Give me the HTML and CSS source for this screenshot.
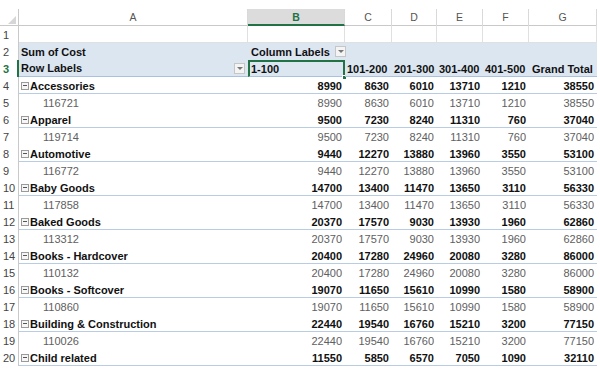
FILE: index.html
```html
<!DOCTYPE html>
<html lang="en">

<head>
    <meta charset="UTF-8">
    <meta name="viewport" content="width=device-width, initial-scale=1.0">
    <title>Sum of Cost pivot</title>

    <link rel="stylesheet" href="styles.css">
</head>

<body>

    <!-- Sheet grid -->
    <div class="sheet" id="sheet">

        <!-- Column letters -->
        <div class="row col-heads">
            <div class="corner"><span class="tri"></span></div>
            <div class="col-head">A</div>
            <div class="col-head active">B</div>
            <div class="col-head">C</div>
            <div class="col-head">D</div>
            <div class="col-head">E</div>
            <div class="col-head">F</div>
            <div class="col-head">G</div>
        </div>

        <!-- Row 1: empty -->
        <div class="row blank">
            <div class="num">1</div>
            <div class="cell"></div>
            <div class="cell"></div>
            <div class="cell"></div>
            <div class="cell"></div>
            <div class="cell"></div>
            <div class="cell"></div>
            <div class="cell"></div>
        </div>

        <!-- Row 2: pivot title -->
        <div class="row band">
            <div class="num">2</div>
            <div class="cell bold">Sum of Cost</div>
            <div class="cell bold span-rest">Column Labels <span class="drop"></span></div>
        </div>

        <!-- Row 3: pivot headers -->
        <div class="row band head-line">
            <div class="num sel">3</div>
            <div class="cell bold with-drop">Row Labels <span class="drop"></span></div>
            <div class="cell bold picked">1-100<span class="handle"></span></div>
            <div class="cell bold">101-200</div>
            <div class="cell bold">201-300</div>
            <div class="cell bold">301-400</div>
            <div class="cell bold">401-500</div>
            <div class="cell bold gt">Grand Total</div>
        </div>

        <!-- Rows 4+ filled in below -->
    </div>

    <script>
        const sheet = document.getElementById('sheet');

        // Category, item code, then costs per bucket and the grand total
        const groups = [
            ['Accessories', '116721', [8990, 8630, 6010, 13710, 1210, 38550]],
            ['Apparel', '119714', [9500, 7230, 8240, 11310, 760, 37040]],
            ['Automotive', '116772', [9440, 12270, 13880, 13960, 3550, 53100]],
            ['Baby Goods', '117858', [14700, 13400, 11470, 13650, 3110, 56330]],
            ['Baked Goods', '113312', [20370, 17570, 9030, 13930, 1960, 62860]],
            ['Books - Hardcover', '110132', [20400, 17280, 24960, 20080, 3280, 86000]],
            ['Books - Softcover', '110860', [19070, 11650, 15610, 10990, 1580, 58900]],
            ['Building &amp; Construction', '110026', [22440, 19540, 16760, 15210, 3200, 77150]],
            ['Child related', null, [11550, 5850, 6570, 7050, 1090, 32110]]
        ];

        function numberCells(values) {
            return values.map(v => `<div class="cell val">${v}</div>`).join('');
        }

        let rowNo = 4;
        let html = '';
        groups.forEach(([label, code, values]) => {
            html += `
                <div class="row group">
                    <div class="num">${rowNo++}</div>
                    <div class="cell bold"><span class="minus"></span>${label}</div>
                    ${numberCells(values)}
                </div>`;
            if (code) {
                html += `
                    <div class="row item">
                        <div class="num">${rowNo++}</div>
                        <div class="cell code">${code}</div>
                        ${numberCells(values)}
                    </div>`;
            }
        });

        sheet.insertAdjacentHTML('beforeend', html);
    </script>

</body>

</html>
```

FILE: styles.css
```css
* {
    margin: 0;
    padding: 0;
    box-sizing: border-box;
}

html, body {
    width: 100%;
    height: 100%;
    overflow: hidden;
    background-color: #ffffff;
    font-family: "Liberation Sans", Arial, sans-serif;
    font-size: 11px;
    color: #111;
}

body {
    padding-top: 9px;
}

/* Sheet grid */
.sheet {
    width: 597px;
}

.row {
    display: grid;
    grid-template-columns: 19px 229px 97px 47px 45px 46px 46px 68px;
    height: 17px;
}

.cell {
    height: 17px;
    line-height: 17px;
    padding: 1px 2px 0 2px;
    white-space: nowrap;
    overflow: visible;
    position: relative;
}

.bold {
    font-weight: bold;
    color: #111;
}

/* Column letters */
.col-heads {
    height: 17px;
    border-bottom: 1px solid #c9c9c9;
}

.corner {
    position: relative;
    border-right: 1px solid #c9c9c9;
}

.tri {
    position: absolute;
    right: 2px;
    bottom: 2px;
    width: 0;
    height: 0;
    border-left: 8px solid transparent;
    border-bottom: 8px solid #d6d6d6;
}

.col-head {
    text-align: center;
    line-height: 16px;
    color: #555;
    font-size: 10.5px;
    border-right: 1px solid #d9d9d9;
}

.col-head.active {
    background-color: #dcdcdc;
    border-bottom: 2px solid #217346;
    color: #217346;
    font-weight: bold;
    height: 17px;
}

/* Row numbers */
.num {
    height: 17px;
    line-height: 17px;
    padding-left: 3px;
    padding-top: 1px;
    color: #444;
    font-size: 11px;
    border-right: 1px solid #c9c9c9;
}

.num.sel {
    color: #217346;
    font-weight: bold;
    border-right: 2px solid #217346;
}

/* Empty row with gridlines */
.blank .cell {
    border-right: 1px solid #e0e0e0;
    border-bottom: 1px solid #e0e0e0;
}

/* Pivot header band */
.band .cell {
    background-color: #dce6f1;
}

.band .span-rest {
    grid-column: 3 / 9;
    padding-left: 3px;
}

.head-line .cell {
    border-bottom: 1px solid #a9c1de;
}

.with-drop {
    display: flex;
    justify-content: space-between;
    align-items: center;
    padding-right: 3px;
}

.drop {
    display: inline-block;
    width: 11px;
    height: 11px;
    vertical-align: -1px;
    margin-left: 2px;
    background-color: #f4f4f4;
    border: 1px solid #c6c6c6;
    position: relative;
}

.drop::after {
    content: "";
    position: absolute;
    left: 2px;
    top: 3px;
    border-left: 3px solid transparent;
    border-right: 3px solid transparent;
    border-top: 3px solid #777;
}

.picked {
    border: 2px solid #217346;
    border-bottom: 2px solid #217346;
    padding-left: 1px;
    line-height: 13px;
}

.handle {
    position: absolute;
    right: -4px;
    bottom: -4px;
    width: 5px;
    height: 5px;
    background-color: #217346;
    border: 1px solid #fff;
}

.gt {
    padding-left: 3px;
}

/* Pivot body */
.val {
    text-align: right;
    padding-right: 3px;
}

.group .cell {
    font-weight: bold;
    color: #111;
    border-bottom: 1px solid #b8cce4;
}

.group .cell:first-of-type {
    padding-left: 3px;
}

.item .cell {
    color: #606060;
}

.code {
    padding-left: 24px;
}

.minus {
    display: inline-block;
    width: 8px;
    height: 8px;
    margin-right: 1px;
    border: 1px solid #9a9a9a;
    background-color: #f6f6f6;
    position: relative;
    vertical-align: 0;
}

.minus::after {
    content: "";
    position: absolute;
    left: 1px;
    right: 1px;
    top: 2px;
    height: 1px;
    background-color: #555;
}
```
